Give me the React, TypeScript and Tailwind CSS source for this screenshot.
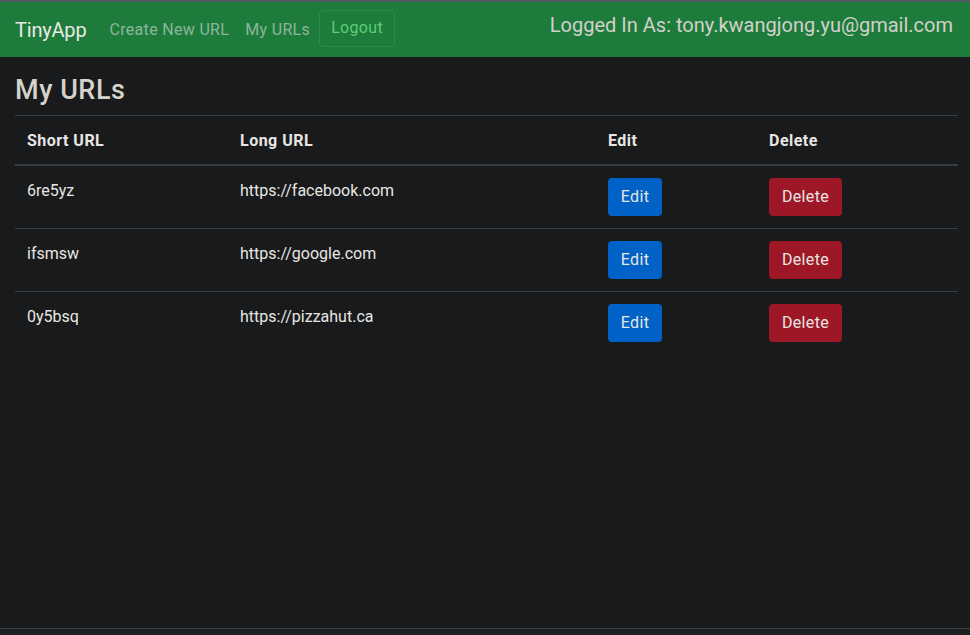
const urls = [
  { short: "6re5yz", long: "https://facebook.com" },
  { short: "ifsmsw", long: "https://google.com" },
  { short: "0y5bsq", long: "https://pizzahut.ca" },
];

function App() {
  return (
    <div
      className="h-[635px] w-[970px] flex flex-col overflow-hidden bg-[#181a1b] text-[#e8e6e3]"
      style={{ fontFamily: "Roboto, 'Liberation Sans', sans-serif" }}
    >
      {/* window top edge */}
      <div className="h-[2px] bg-[#525866]" />

      {/* Navbar */}
      <nav className="h-[55px] bg-[#1d7c3b] flex items-center justify-between pl-[15px] pr-[17px]">
        <div className="flex items-center">
          <a href="#" className="text-[20px] text-[#ece9e5] mr-[23px] tracking-[-0.01em]">
            TinyApp
          </a>
          <a href="#" className="text-[16px] text-[#8fb59b] mr-[16px] tracking-[0.02em]">
            Create New URL
          </a>
          <a href="#" className="text-[16px] text-[#8fb59b] mr-[9px] tracking-[0.02em]">
            My URLs
          </a>
          <button className="h-[37px] w-[76px] -mt-[3px] border border-[#2a8d47] rounded-[4px] text-[16px] text-[#5ccd78] tracking-[0.02em]">
            Logout
          </button>
        </div>
        <div className="text-[20px] text-[#d4d0ca] -mt-[10px]">
          Logged In As: tony.kwangjong.yu@gmail.com
        </div>
      </nav>

      {/* Content */}
      <main className="flex-1 px-[15px] pt-[17px]">
        <h3 className="text-[27px] leading-[32px] font-medium text-[#d6d2cc] mb-[9px] tracking-[0.02em]">
          My URLs
        </h3>
        <table className="w-[943px] border-collapse text-[16px] table-fixed">
          <thead>
            <tr className="border-t border-[#3a3e41] border-b-2 border-b-[#383d3f]">
              <th className="w-[213px] text-left font-bold px-[12px] pt-[13px] pb-[11px] leading-[24px] tracking-[0.03em]">
                Short URL
              </th>
              <th className="w-[368px] text-left font-bold px-[12px] pt-[13px] pb-[11px] leading-[24px] tracking-[0.03em]">
                Long URL
              </th>
              <th className="w-[161px] text-left font-bold px-[12px] pt-[13px] pb-[11px] leading-[24px] tracking-[0.03em]">
                Edit
              </th>
              <th className="text-left font-bold px-[12px] pt-[13px] pb-[11px] leading-[24px] tracking-[0.03em]">
                Delete
              </th>
            </tr>
          </thead>
          <tbody>
            {urls.map((u, i) => (
              <tr
                key={u.short}
                className={i < urls.length - 1 ? "border-b border-[#3a3e41]" : ""}
              >
                <td className="align-top px-[12px] pt-[13px] pb-[11px] leading-[24px]">
                  {u.short}
                </td>
                <td className="align-top px-[12px] pt-[13px] pb-[11px] leading-[24px]">
                  {u.long}
                </td>
                <td className="align-top p-[12px]">
                  <button className="h-[38px] w-[54px] rounded-[4px] bg-[#0061c6] text-[#e8e6e3] tracking-[0.02em]">
                    Edit
                  </button>
                </td>
                <td className="align-top p-[12px]">
                  <button className="h-[38px] w-[73px] rounded-[4px] bg-[#9e1727] text-[#e8e6e3] tracking-[0.02em]">
                    Delete
                  </button>
                </td>
              </tr>
            ))}
          </tbody>
        </table>
      </main>

      {/* window bottom edge and the terminal behind it */}
      <div className="h-[7px] border-t border-[#3a3d40] bg-[#1e2021]" />
    </div>
  );
}

export default App;
